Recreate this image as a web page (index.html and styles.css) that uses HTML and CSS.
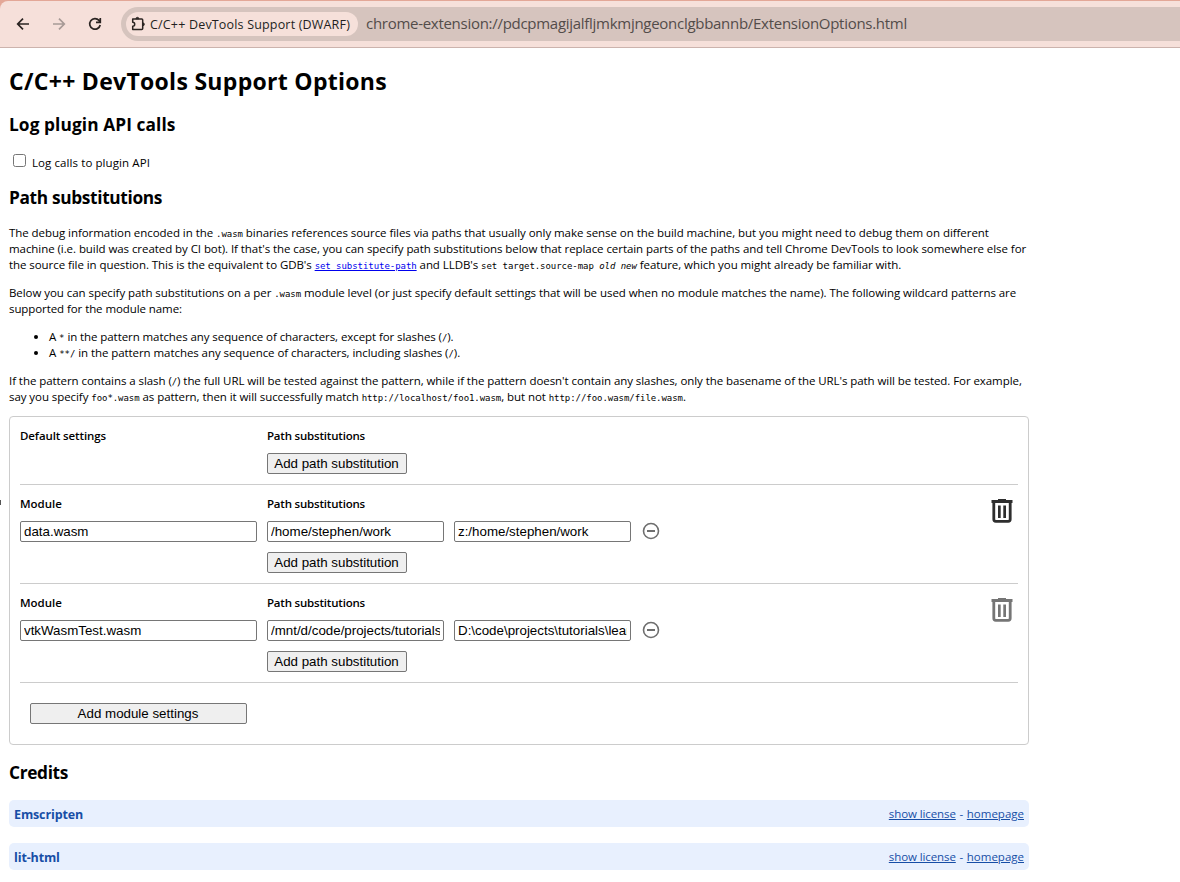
FILE: index.html
```html
<!DOCTYPE html>
<html lang="en">
<head>
<meta charset="utf-8">
<title>C/C++ DevTools Support Options</title>
<link rel="stylesheet" href="styles.css">
</head>
<body>
<div class="frame"><header class="toolbar">
  <nav class="nav">
    <svg width="16" height="16" viewBox="0 0 16 16" fill="none" stroke="#2b2422" stroke-width="1.7"><path d="M14 8H3M8 2.700 2.700 8 8 13.300"/></svg>
    <svg width="16" height="16" viewBox="0 0 16 16" fill="none" stroke="#a79a96" stroke-width="1.7"><path d="M2 8h11M8 2.700 13.300 8 8 13.300"/></svg>
    <svg width="16" height="16" viewBox="0 0 16 16" fill="none" stroke="#2b2422" stroke-width="1.7"><path d="M13.200 9A5.300 5.300 0 1 1 12 4.400l1.200 1.300M13.300 2v4.300H9"/></svg>
  </nav>
  <div class="omnibox">
    <div class="chip">
      <svg width="16" height="16" viewBox="0 0 16 16" fill="none" stroke="#2b2422" stroke-width="1.5" stroke-linejoin="round"><path d="M2.700 3h9a1 1 0 0 1 1 1v8.500a1 1 0 0 1-1 1h-9v-3.200a2 2 0 0 0 0-4z"/><path d="M5.900 2.800a1.500 1.500 0 0 1 3 0zM13 6.900a1.400 1.400 0 0 1 0 2.800z" fill="#2b2422" stroke-width=".8"/></svg>
      <span class="chip-text">C/C++ DevTools Support (DWARF)</span>
    </div>
    <span class="url">chrome-extension://pdcpmagijalfljmkmjngeonclgbbannb/ExtensionOptions.html</span>
  </div>
</header></div>
<main class="page">
  <h1>C/C++ DevTools Support Options</h1>
  <h2 class="h-log">Log plugin API calls</h2>
  <label class="check"><input type="checkbox"><span>Log calls to plugin API</span></label>
  <h2 class="h-path">Path substitutions</h2>
  <p><span class="line wide">The debug information encoded in the <code>.wasm</code> binaries references source files via paths that usually only make sense on the build machine, but you might need to debug them on different</span>
  <span class="line second">machine (i.e. build was created by CI bot). If that's the case, you can specify path substitutions below that replace certain parts of the paths and tell Chrome DevTools to look somewhere else for</span>
  <span class="line">the source file in question. This is the equivalent to GDB's <a class="ref" href="#"><code>set substitute-path</code></a> and LLDB's <code>set target.source-map <i>old</i> <i>new</i></code> feature, which you might already be familiar with.</span></p>
  <p><span class="line wide">Below you can specify path substitutions on a per <code>.wasm</code> module level (or just specify default settings that will be used when no module matches the name). The following wildcard patterns are</span>
  <span class="line tight">supported for the module name:</span></p>
  <ul>
    <li><span class="line tight">A <code>*</code> in the pattern matches any sequence of characters, except for slashes (<code>/</code>).</span></li>
    <li><span class="line">A <code>**/</code> in the pattern matches any sequence of characters, including slashes (<code>/</code>).</span></li>
  </ul>
  <p><span class="line">If the pattern contains a slash (<code>/</code>) the full URL will be tested against the pattern, while if the pattern doesn't contain any slashes, only the basename of the URL's path will be tested. For example,</span>
  <span class="line">say you specify <code>foo*.wasm</code> as pattern, then it will successfully match <code>http://localhost/foo1.wasm</code>, but not <code>http://foo.wasm/file.wasm</code>.</span></p>

  <section class="settings">
    <div class="module">
      <div class="name"><b class="default">Default settings</b></div>
      <div class="paths"><b>Path substitutions</b><button>Add path substitution</button></div>
    </div>
    <div class="module">
      <div class="name"><b>Module</b><input value="data.wasm"></div>
      <div class="paths"><b>Path substitutions</b>
        <div class="pair"><input value="/home/stephen/work"><input value="z:/home/stephen/work"><svg width="20" height="20" viewBox="0 0 20 20" fill="none" stroke="#6e6e6e" stroke-width="1.6"><circle cx="10" cy="10" r="7.5"/><path d="M6 10h8" stroke-width="2"/></svg></div>
        <button>Add path substitution</button></div>
      <svg class="trash dark" width="24" height="26" viewBox="0 0 24 26"><path d="M8 1h8v1h6.500v3h-21V2H8z"/><path d="M3.800 5v16.300a2 2 0 0 0 2 2h12.400a2 2 0 0 0 2-2V5" fill="none" stroke="currentColor" stroke-width="2.800"/><path d="M8 7.500h2.700v12.500H8zM13.300 7.500H16v12.500h-2.700z"/></svg>
    </div>
    <div class="module">
      <div class="name"><b>Module</b><input value="vtkWasmTest.wasm"></div>
      <div class="paths"><b>Path substitutions</b>
        <div class="pair"><input value="/mnt/d/code/projects/tutorials"><input value="D:\code\projects\tutorials\learn"><svg width="20" height="20" viewBox="0 0 20 20" fill="none" stroke="#6e6e6e" stroke-width="1.6"><circle cx="10" cy="10" r="7.5"/><path d="M6 10h8" stroke-width="2"/></svg></div>
        <button>Add path substitution</button></div>
      <svg class="trash" width="24" height="26" viewBox="0 0 24 26"><path d="M8 1h8v1h6.500v3h-21V2H8z"/><path d="M3.800 5v16.300a2 2 0 0 0 2 2h12.400a2 2 0 0 0 2-2V5" fill="none" stroke="currentColor" stroke-width="2.800"/><path d="M8 7.500h2.700v12.500H8zM13.300 7.500H16v12.500h-2.700z"/></svg>
    </div>
    <button class="add-module">Add module settings</button>
  </section>

  <h2 class="h-credits">Credits</h2>
  <div class="credit"><strong>Emscripten</strong><span><a class="license" href="#">show license</a><span class="dash">-</span><a href="#">homepage</a></span></div>
  <div class="credit"><strong>lit-html</strong><span><a class="license" href="#">show license</a><span class="dash">-</span><a href="#">homepage</a></span></div>
</main>
<div class="edge-mark"></div>
</body>
</html>
```
FILE: styles.css
```css
* { box-sizing: border-box; }
body { margin: 0; background: #fff; color: #000; font: 11.5px/16px "Open Sans", "Noto Sans", sans-serif; height: 882px; overflow: hidden; }

/* Browser toolbar */
.frame { height: 48px; padding-top: 1px; background: #e3a797; }
.toolbar { height: 47px; display: flex; align-items: center; background: #f6e0da; border-bottom: 1px solid #ccb3ad; border-top-left-radius: 8px; }
.nav { display: flex; gap: 20px; padding-left: 15px; width: 121px; }
.omnibox { flex: 1; height: 34px; background: #d6c4be; border-radius: 17px 0 0 17px; display: flex; align-items: center; padding-left: 5px; gap: 8px; white-space: nowrap; }
.chip { width: 232px; height: 24px; border-radius: 12px; background: #f6e0da; display: flex; align-items: center; padding-left: 4px; gap: 4px; color: #231f1e; }
.chip svg { flex: none; }
.chip-text { font-size: 12.5px; letter-spacing: .177px; padding-top: 1px; }
.url { font-size: 15px; line-height: 20px; color: #534c4a; letter-spacing: -.282px; padding-bottom: 2px; }

/* Options page */
.page { width: 1020px; margin-left: 9px; padding-top: 17px; }
h1 { margin: 0; font-size: 23px; line-height: 32px; letter-spacing: .293px; }
h2 { margin: 0; font-size: 17.3px; line-height: 24px; letter-spacing: -.34px; }
.h-log { margin-top: 16px; letter-spacing: .094px; }
.check { display: flex; align-items: center; height: 16px; margin-top: 18px; letter-spacing: .09px; }
.check input { width: 13px; height: 13px; margin: 0 6px 5px 4px; }
.h-path { margin-top: 15px; }
p, ul { margin: 0 0 12px; }
.h-path + p { margin-top: 15px; }
.line { display: block; height: 16px; white-space: nowrap; letter-spacing: -.067px; }
.line.wide { letter-spacing: -.0555px; }
.line.second { letter-spacing: -.0645px; }
.line.tight { letter-spacing: -.082px; }
ul { padding-left: 40px; }
code { font: 9px/1 "DejaVu Sans Mono", monospace; letter-spacing: -.05px; }
.ref { color: #0000ee; }

/* Module settings */
.settings { height: 329px; margin-top: -1px; border: 1px solid #ccc; border-radius: 4px; padding: 0 10px; }
.module { display: flex; gap: 10px; border-bottom: 1px solid #ccc; padding: 11px 0 10px; }
.name { width: 237px; display: flex; flex-direction: column; align-items: flex-start; }
.paths { flex: 1; display: flex; flex-direction: column; align-items: flex-start; }
b { font-weight: 600; margin-bottom: 9px; }
.name b.default { letter-spacing: -.109px; }
.paths b { letter-spacing: -.196px; }
input:not([type]), button { font: 13.333px/15px "Liberation Sans", Arial, sans-serif; height: 21px; border: 1px solid #767676; border-radius: 2px; margin: 0; color: #000; }
input:not([type]) { padding: 0 3px; width: 177px; background: #fff; }
.name input:not([type]) { width: 237px; }
button { background: #efefef; width: 140px; padding: 0 1px 0 0; }
.pair { display: flex; gap: 10px; margin-bottom: 10px; }
.trash { color: #757575; fill: currentColor; margin: 2px 4px 0 0; }
.dark { color: #2e2e2e; }
.add-module { width: 217px; margin: 20px 0 0 10px; }

/* Credits */
.h-credits { margin-top: 16px; }
.credit { display: flex; justify-content: space-between; align-items: center; height: 27px; margin: 15px 0 16px; padding: 0 5px; background: #e8f0fe; border-radius: 5px; color: #174ea6; }
.credit + .credit { margin-top: 0; }
.credit strong { font-size: 12.5px; letter-spacing: -.125px; padding-top: 2px; }
.credit a { color: inherit; }
.license { letter-spacing: -.094px; }
.dash { display: inline-block; width: 11px; text-align: center; }

.edge-mark { position: absolute; left: 0; top: 500px; width: 1px; height: 5px; background: #555; }
```
